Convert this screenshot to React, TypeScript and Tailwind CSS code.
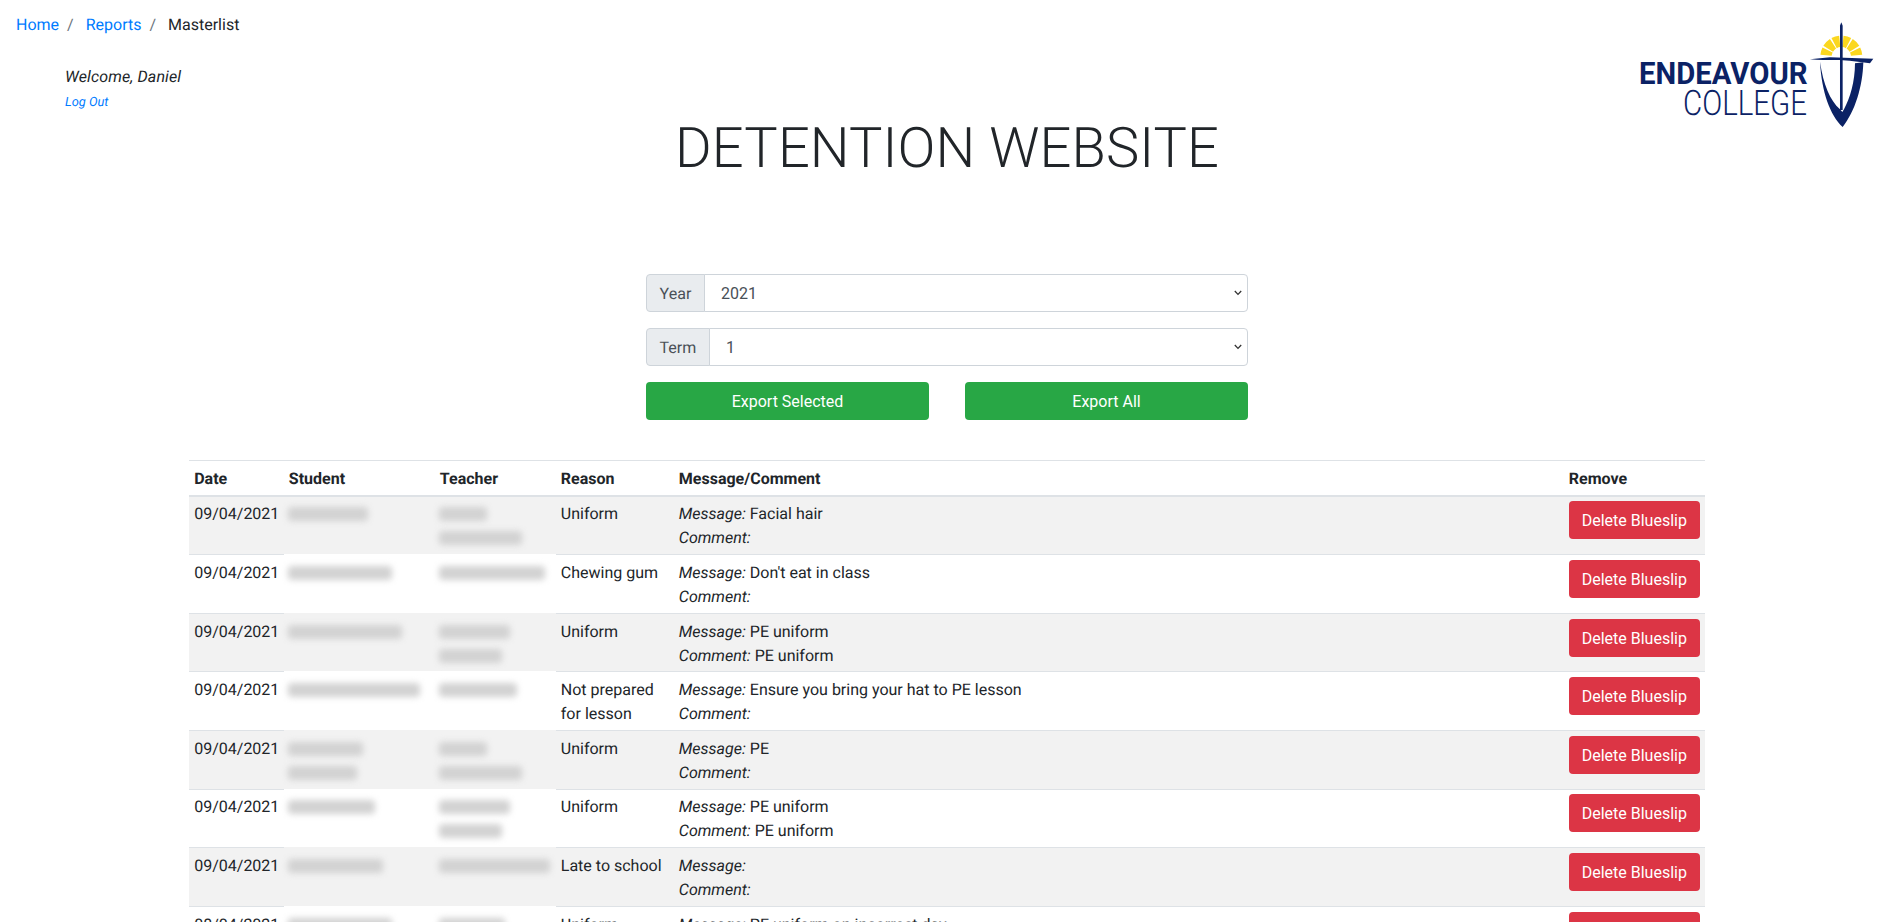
import React from "react";

type Row = {
  date: string;
  student: number[];
  teacher: number[];
  reason: string;
  message: string;
  comment: string;
};

const rows: Row[] = [
  { date: "09/04/2021", student: [80], teacher: [48, 83], reason: "Uniform", message: "Facial hair", comment: "" },
  { date: "09/04/2021", student: [104], teacher: [106], reason: "Chewing gum", message: "Don't eat in class", comment: "" },
  { date: "09/04/2021", student: [114], teacher: [71, 63], reason: "Uniform", message: "PE uniform", comment: "PE uniform" },
  { date: "09/04/2021", student: [132], teacher: [78], reason: "Not prepared for lesson", message: "Ensure you bring your hat to PE lesson", comment: "" },
  { date: "09/04/2021", student: [75, 69], teacher: [48, 83], reason: "Uniform", message: "PE", comment: "" },
  { date: "09/04/2021", student: [87], teacher: [71, 63], reason: "Uniform", message: "PE uniform", comment: "PE uniform" },
  { date: "09/04/2021", student: [95], teacher: [111], reason: "Late to school", message: "", comment: "" },
  { date: "08/04/2021", student: [104], teacher: [66, 63], reason: "Uniform", message: "PE uniform on incorrect day", comment: "" },
];

function polar(r: number, deg: number) {
  const a = (deg * Math.PI) / 180;
  return `${184 + r * Math.cos(a)},${125 - r * Math.sin(a)}`;
}

function ray(from: number, to: number) {
  return `M${polar(29, from)} L${polar(63, from)} A63,63 0 0 0 ${polar(63, to)} L${polar(29, to)} A29,29 0 0 1 ${polar(29, from)} Z`;
}

const rayRanges = [
  [5, 26],
  [31, 57],
  [62, 84],
  [96, 118],
  [123, 149],
  [154, 175],
];

function Logo() {
  return (
    <svg width="274" height="130" viewBox="0 0 274 130" className="mt-[10px] block">
      <text
        x="19"
        y="74"
        fontFamily="Roboto, sans-serif"
        fontWeight="700"
        fontSize="31"
        fill="#0b2265"
        textLength="168.5"
        lengthAdjust="spacingAndGlyphs"
      >
        ENDEAVOUR
      </text>
      <text
        x="63"
        y="105"
        fontFamily="Roboto, sans-serif"
        fontWeight="300"
        fontSize="35"
        fill="#0b2265"
        textLength="124"
        lengthAdjust="spacingAndGlyphs"
      >
        COLLEGE
      </text>
      <g transform="translate(160 5) scale(0.3333)">
        {rayRanges.map(([a, b]) => (
          <path key={a} d={ray(a, b)} fill="#fbd71f" />
        ))}
        <path d="M120,140 C125,230 150,300 188,336 C225,290 248,215 250,142 L225,145 C225,200 210,250 192,283 L187,291 L180,283 C150,255 130,210 120,140 Z" fill="#0b2265" />
        <path d="M90,133 L150,127 L280,131 L270,145 C240,140 200,136 180,135 C150,134 120,137 90,133 Z" fill="#0b2265" />
        <path d="M184,22 L188,32 L188,285 L180,285 L180,32 Z" fill="#0b2265" />
      </g>
    </svg>
  );
}

function Redacted({ widths }: { widths: number[] }) {
  return (
    <div className="flex flex-col -ml-px">
      {widths.map((w, i) => (
        <div key={i} className="h-6 flex items-center">
          <div className="h-[14px] rounded-[4px] bg-[#d2d2d2] blur-[3px]" style={{ width: w }} />
        </div>
      ))}
    </div>
  );
}

function SelectGroup({ label, value, options }: { label: string; value: string; options: string[] }) {
  return (
    <div className="flex h-[38px] w-full">
      <span className="flex items-center px-[12.6px] pt-px bg-[#e9ecef] border border-[#ced4da] rounded-l text-[#495057]">{label}</span>
      <div className="relative flex-1 -ml-px">
        <select
          defaultValue={value}
          className="appearance-none w-full h-[38px] pl-4 pr-3 pt-[7px] pb-[5px] bg-white border border-[#ced4da] rounded-r text-[#495057]"
        >
          {options.map((o) => (
            <option key={o}>{o}</option>
          ))}
        </select>
        <svg width="8" height="6" viewBox="0 0 8 6" className="absolute right-[6px] top-[16px] pointer-events-none">
          <path d="M0.8 1 L4 4.4 L7.2 1" fill="none" stroke="#333" strokeWidth="1.3" />
        </svg>
      </div>
    </div>
  );
}

const th = "px-[4.8px] pt-[5.8px] pb-[3.8px] text-left font-bold align-bottom border-t border-b-2 border-[#dee2e6]";
const td = "px-[4.8px] pt-[5.8px] pb-[3.8px] align-top";

export default function App() {
  return (
    <div className="h-[922px] overflow-hidden bg-white text-[#212529] text-base leading-6 font-['Roboto',sans-serif] [text-rendering:geometricPrecision]">
      <header className="grid grid-cols-3">
        <div>
          <nav className="flex px-4 pt-[13px] pb-[11px]">
            <a className="text-[#007bff]">Home</a>
            <span className="px-2 text-[#6c757d]">/</span>
            <a className="pl-1 text-[#007bff]">Reports</a>
            <span className="px-2 text-[#6c757d]">/</span>
            <span className="pl-1">Masterlist</span>
          </nav>
          <div className="mt-[17px] pl-[65px]">
            <p className="italic tracking-[0.13px]">Welcome, Daniel</p>
            <a className="block mt-[5px] italic text-[12.8px] leading-[18px] text-[#007bff]">Log Out</a>
          </div>
        </div>
        <h1 className="pt-[115px] text-center whitespace-nowrap text-[56px] leading-[67px] font-light tracking-[0.1px]">DETENTION WEBSITE</h1>
        <div className="flex justify-end">
          <Logo />
        </div>
      </header>

      <form className="mt-[92px] mx-auto w-[602px] flex flex-col gap-4">
        <SelectGroup label="Year" value="2021" options={["2021", "2020"]} />
        <SelectGroup label="Term" value="1" options={["1", "2", "3", "4"]} />
        <div className="grid grid-cols-2 gap-9">
          <button type="button" className="h-[38px] pt-px rounded bg-[#28a745] text-white">Export Selected</button>
          <button type="button" className="h-[38px] pt-px rounded bg-[#28a745] text-white">Export All</button>
        </div>
      </form>

      <table className="mt-10 mx-auto w-4/5 table-fixed border-separate border-spacing-0">
        <colgroup>
          <col className="w-[94.6px]" />
          <col className="w-[151px]" />
          <col className="w-[121px]" />
          <col className="w-[118px]" />
          <col />
          <col className="w-[140.6px]" />
        </colgroup>
        <thead>
          <tr>
            <th className={th}>Date</th>
            <th className={th}>Student</th>
            <th className={th}>Teacher</th>
            <th className={th}>Reason</th>
            <th className={th}>Message/Comment</th>
            <th className={th}>Remove</th>
          </tr>
        </thead>
        <tbody>
          {rows.map((r, i) => {
            const bg = i % 2 === 0 ? "bg-[#f2f2f2]" : "bg-white";
            const line = i === 0 ? "" : "border-t border-[#dee2e6]";
            const soft = i === 0 ? "" : "border-t border-transparent";
            return (
              <tr key={i} className={bg}>
                <td className={`${td} ${line}`}>{r.date}</td>
                <td className={`${td} ${soft}`}><Redacted widths={r.student} /></td>
                <td className={`${td} ${soft}`}><Redacted widths={r.teacher} /></td>
                <td className={`${td} ${line}`}>{r.reason}</td>
                <td className={`${td} ${line}`}>
                  <div><em>Message:</em> {r.message}</div>
                  <div><em>Comment:</em> {r.comment}</div>
                </td>
                <td className={`${td} !pt-[4.8px] ${line}`}>
                  <button type="button" className="h-[38px] w-[131px] pt-[2px] rounded bg-[#dc3545] text-white whitespace-nowrap">Delete Blueslip</button>
                </td>
              </tr>
            );
          })}
        </tbody>
      </table>
    </div>
  );
}
